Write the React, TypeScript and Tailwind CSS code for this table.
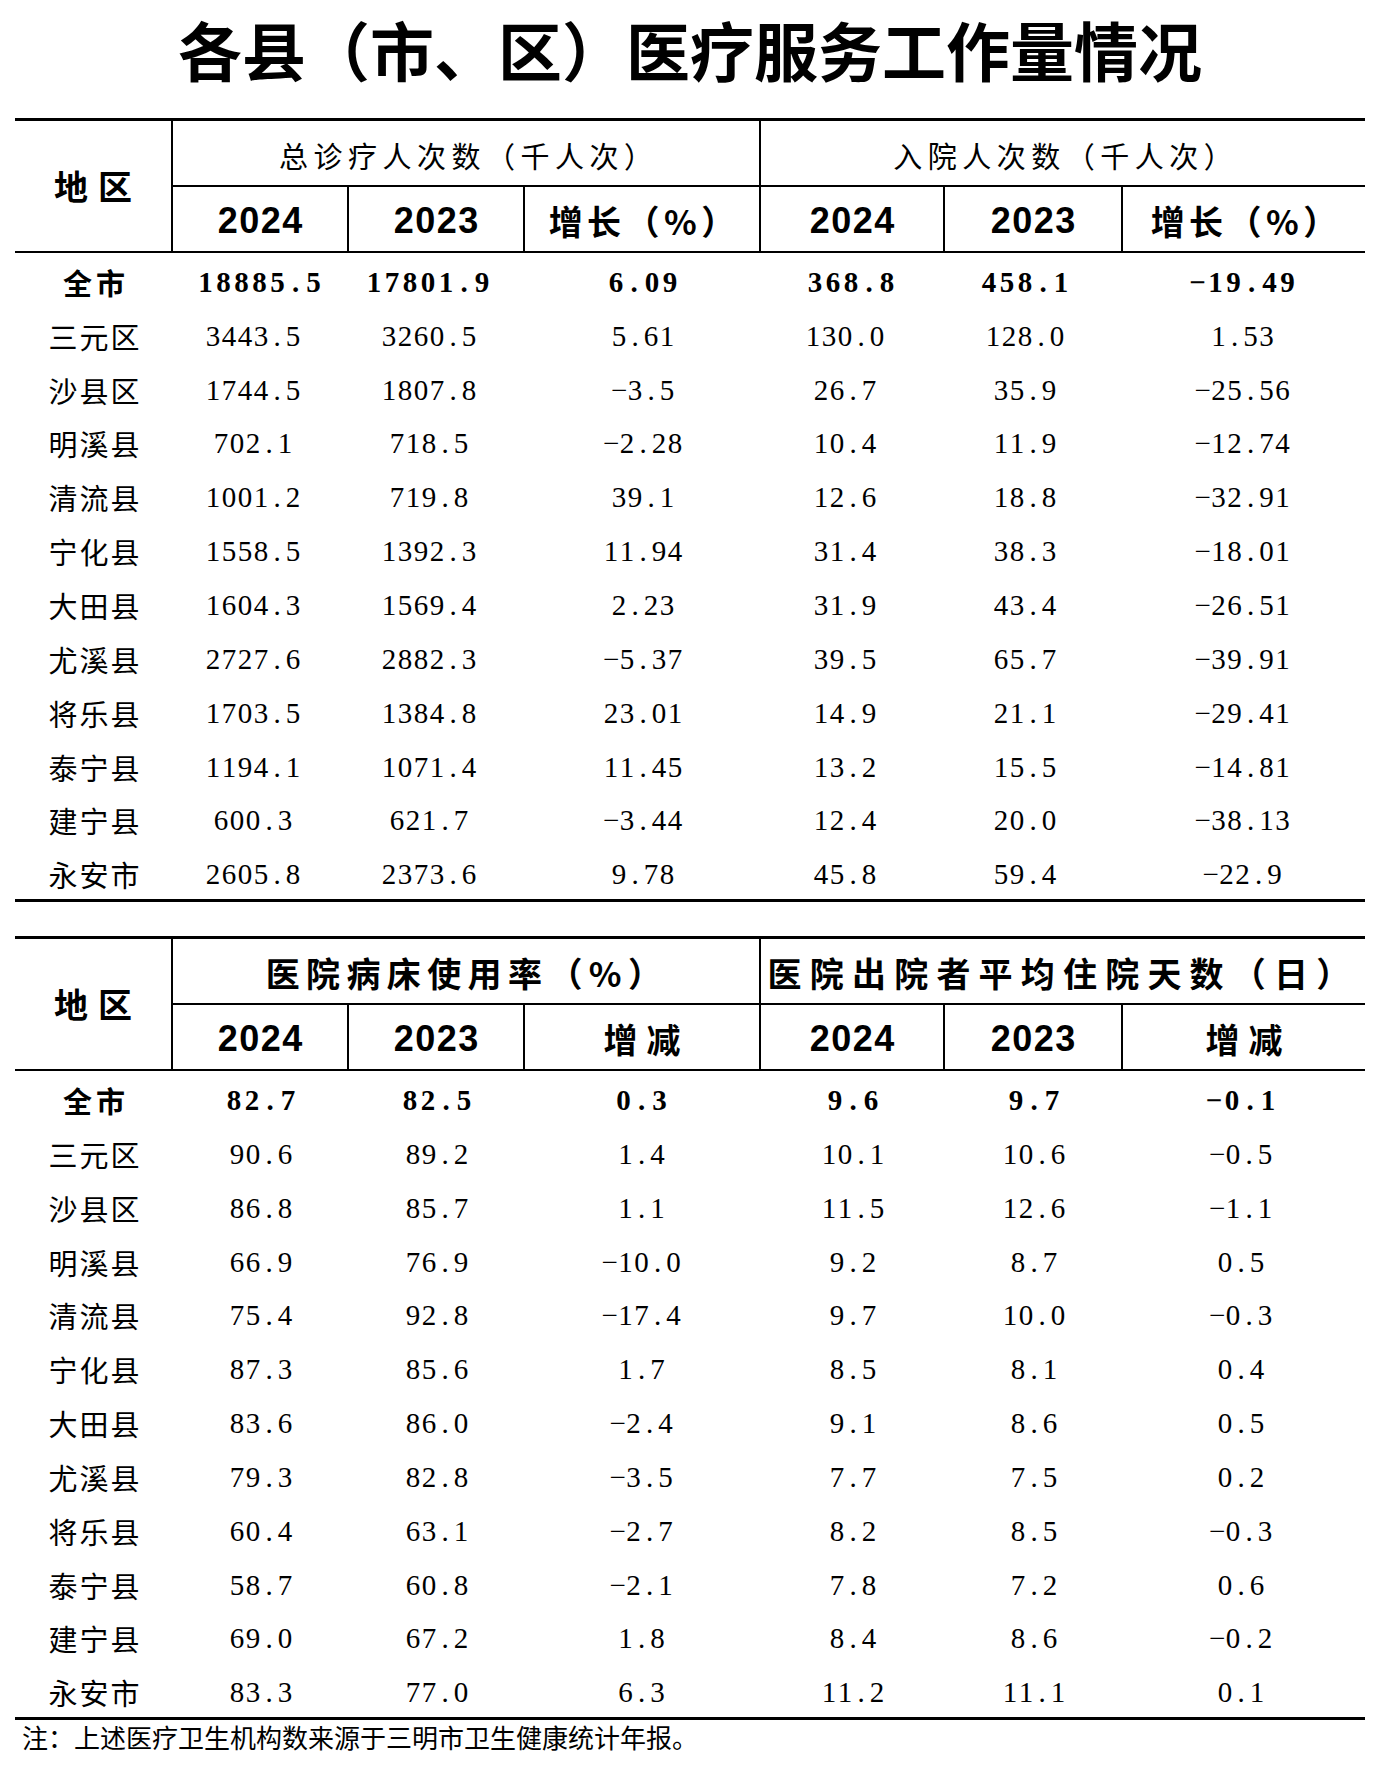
const hei = "font-['Noto_Sans_CJK_SC',sans-serif]";
const song = "font-['Liberation_Serif','Noto_Sans_CJK_SC',serif]";
const latinBold = "font-['Liberation_Sans','Noto_Sans_CJK_SC',sans-serif]";
const cols = "grid grid-cols-[158px_176px_176px_236px_184px_178px_242px]";

type Row = [string, string, string, string, string, string, string];

const visits: Row[] = [
  ["全市", "18885.5", "17801.9", "6.09", "368.8", "458.1", "-19.49"],
  ["三元区", "3443.5", "3260.5", "5.61", "130.0", "128.0", "1.53"],
  ["沙县区", "1744.5", "1807.8", "-3.5", "26.7", "35.9", "-25.56"],
  ["明溪县", "702.1", "718.5", "-2.28", "10.4", "11.9", "-12.74"],
  ["清流县", "1001.2", "719.8", "39.1", "12.6", "18.8", "-32.91"],
  ["宁化县", "1558.5", "1392.3", "11.94", "31.4", "38.3", "-18.01"],
  ["大田县", "1604.3", "1569.4", "2.23", "31.9", "43.4", "-26.51"],
  ["尤溪县", "2727.6", "2882.3", "-5.37", "39.5", "65.7", "-39.91"],
  ["将乐县", "1703.5", "1384.8", "23.01", "14.9", "21.1", "-29.41"],
  ["泰宁县", "1194.1", "1071.4", "11.45", "13.2", "15.5", "-14.81"],
  ["建宁县", "600.3", "621.7", "-3.44", "12.4", "20.0", "-38.13"],
  ["永安市", "2605.8", "2373.6", "9.78", "45.8", "59.4", "-22.9"],
];

const beds: Row[] = [
  ["全市", "82.7", "82.5", "0.3", "9.6", "9.7", "-0.1"],
  ["三元区", "90.6", "89.2", "1.4", "10.1", "10.6", "-0.5"],
  ["沙县区", "86.8", "85.7", "1.1", "11.5", "12.6", "-1.1"],
  ["明溪县", "66.9", "76.9", "-10.0", "9.2", "8.7", "0.5"],
  ["清流县", "75.4", "92.8", "-17.4", "9.7", "10.0", "-0.3"],
  ["宁化县", "87.3", "85.6", "1.7", "8.5", "8.1", "0.4"],
  ["大田县", "83.6", "86.0", "-2.4", "9.1", "8.6", "0.5"],
  ["尤溪县", "79.3", "82.8", "-3.5", "7.7", "7.5", "0.2"],
  ["将乐县", "60.4", "63.1", "-2.7", "8.2", "8.5", "-0.3"],
  ["泰宁县", "58.7", "60.8", "-2.1", "7.8", "7.2", "0.6"],
  ["建宁县", "69.0", "67.2", "1.8", "8.4", "8.6", "-0.2"],
  ["永安市", "83.3", "77.0", "6.3", "11.2", "11.1", "0.1"],
];

// half-width monospaced digits, like the 宋体 figures in the source sheet
function Num({ value, bold }: { value: string; bold?: boolean }) {
  return (
    <span className={`inline-flex ${song} text-[29px] leading-none ${bold ? "font-bold" : ""}`}>
      {value.split("").map((ch, i) => (
        <span key={i} className={`${bold ? "w-[18px]" : "w-[16px]"} text-center`}>
          {ch === "-" ? "−" : ch}
        </span>
      ))}
    </span>
  );
}

function Header({
  group1,
  group2,
  change,
  group1Class,
  group2Class,
  changeClass,
}: {
  group1: string;
  group2: string;
  change: string;
  group1Class: string;
  group2Class: string;
  changeClass: string;
}) {
  const year = `${latinBold} text-[36px] font-bold tracking-[1.5px] pl-[1.5px] leading-none`;
  return (
    <div className={`${cols} grid-rows-[66px_64px] border-t-[3px] border-b-2 border-black`}>
      <div className="row-span-2 flex items-center justify-center border-r-2 border-black">
        <span className={`${hei} text-[34px] font-bold tracking-[10px] pl-[10px] leading-none`}>地区</span>
      </div>
      <div className="col-span-3 flex items-center justify-center border-r-2 border-b-2 border-black pt-[4px]">
        <span className={`${hei} leading-none ${group1Class}`}>{group1}</span>
      </div>
      <div className="col-span-3 flex items-center justify-center border-b-2 border-black pt-[4px]">
        <span className={`${hei} leading-none ${group2Class}`}>{group2}</span>
      </div>
      <div className="flex items-center justify-center border-r-2 border-black pt-[4px]">
        <span className={year}>2024</span>
      </div>
      <div className="flex items-center justify-center border-r-2 border-black pt-[4px]">
        <span className={year}>2023</span>
      </div>
      <div className="flex items-center justify-center border-r-2 border-black pt-[4px]">
        <span className={`${hei} text-[34px] font-bold leading-none ${changeClass}`}>{change}</span>
      </div>
      <div className="flex items-center justify-center border-r-2 border-black pt-[4px]">
        <span className={year}>2024</span>
      </div>
      <div className="flex items-center justify-center border-r-2 border-black pt-[4px]">
        <span className={year}>2023</span>
      </div>
      <div className="flex items-center justify-center pt-[4px]">
        <span className={`${hei} text-[34px] font-bold leading-none ${changeClass}`}>{change}</span>
      </div>
    </div>
  );
}

function Body({ rows, pads }: { rows: Row[]; pads: { normal: string[]; bold: string[] } }) {
  return (
    <div className="border-b-[3px] border-black">
      {rows.map((row, r) => {
        const bold = r === 0;
        return (
          <div key={row[0]} className={`${cols} h-[53.85px] items-center pt-[5px]`}>
            <div className="flex justify-center">
              <span
                className={`${hei} text-[29px] leading-none ${
                  bold ? "font-bold tracking-[4px] pl-[4px]" : "tracking-[2px] pl-[2px]"
                }`}
              >
                {row[0]}
              </span>
            </div>
            {row.slice(1).map((v, c) => (
              <div key={c} className={`flex justify-center ${bold ? pads.bold[c] : pads.normal[c]}`}>
                <Num value={v} bold={bold} />
              </div>
            ))}
          </div>
        );
      })}
    </div>
  );
}

export default function App() {
  return (
    <div className="w-[1380px] h-[1766px] bg-white text-black px-[15px]">
      <div className="h-[118px] flex justify-center pt-[14px]">
        <h1 className={`${hei} text-[64px] font-bold leading-[68px]`}>各县（市、区）医疗服务工作量情况</h1>
      </div>

      <Header
        group1="总诊疗人次数（千人次）"
        group2="入院人次数（千人次）"
        change="增长（%）"
        group1Class="text-[29px] tracking-[5.5px] pl-[5.5px]"
        group2Class="text-[29px] tracking-[5.5px] pl-[5.5px]"
        changeClass="tracking-[4.5px] pl-[4.5px]"
      />
      <Body
        rows={visits}
        pads={{
          normal: ["pr-[16px]", "pr-[16px]", "", "pr-[16px]", "pr-[18px]", "pr-[3px]"],
          bold: ["pr-[3px]", "pr-[18px]", "", "pr-[4px]", "pr-[18px]", "pr-[3px]"],
        }}
      />

      <div className="h-[34px]" />

      <Header
        group1="医院病床使用率（%）"
        group2="医院出院者平均住院天数（日）"
        change="增减"
        group1Class="text-[34px] font-bold tracking-[6.4px] pl-[2px]"
        group2Class="text-[34px] font-bold tracking-[8.2px]"
        changeClass="tracking-[9px] pl-[9px]"
      />
      <Body
        rows={beds}
        pads={{
          normal: ["", "", "pr-[3px]", "", "", "pr-[6px]"],
          bold: ["", "", "pr-[3px]", "", "", "pr-[6px]"],
        }}
      />

      <p className={`${hei} text-[26px] leading-[34px] pl-[7px]`}>
        注：上述医疗卫生机构数来源于三明市卫生健康统计年报。
      </p>
    </div>
  );
}
